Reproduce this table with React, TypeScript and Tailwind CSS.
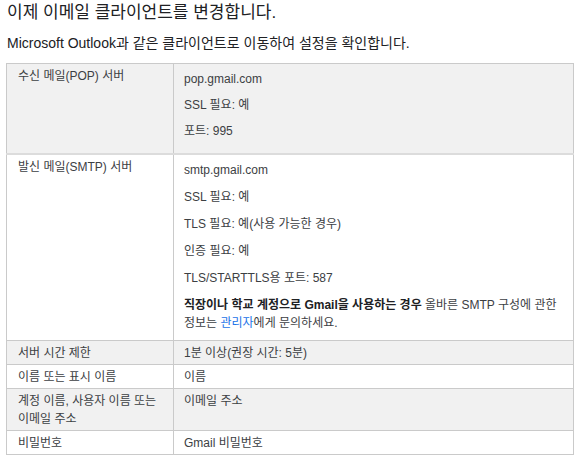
import React from "react";

const font = { fontFamily: "'Liberation Sans', Arial, 'Noto Sans CJK KR', sans-serif" };

function Lines({ items, gap }: { items: React.ReactNode[]; gap: "a" | "b" }) {
  return (
    <div className={gap === "a" ? "flex flex-col gap-[8px] pt-[3px] pb-[11px]" : "flex flex-col gap-[9px] pt-[3px] pb-[6px]"}>
      {items.map((it, i) => (
        <p key={i} className="leading-[18px]">
          {it}
        </p>
      ))}
    </div>
  );
}

const c1 = "w-[167px] align-top border border-[#cacaca] pl-[11px] pr-[8px] pt-[3px] pb-[2px]";
const c2 = "align-top border border-[#cacaca] px-[10px] pt-[3px] pb-[2px]";

export default function App() {
  return (
    <div className="w-[580px] h-[469px] bg-white text-[#202124]" style={font}>
      <div className="px-[7px] pt-[3px]">
        <h1 className="text-[17px] leading-[20px] font-normal">이제 이메일 클라이언트를 변경합니다.</h1>
        <p className="mt-[11px] text-[14px] leading-[18px]">
          Microsoft Outlook과 같은 클라이언트로 이동하여 설정을 확인합니다.
        </p>
      </div>
      <div className="px-[6px] mt-[11px]">
        <table className="w-[568px] border-collapse text-[12px] leading-[18px] text-[#3c4043]">
          <tbody>
            <tr className="bg-[#f1f1f1] border-b-2 border-b-[#dcdcdc]">
              <td className={c1}>수신 메일(POP) 서버</td>
              <td className={c2}>
                <Lines gap="a" items={["pop.gmail.com", "SSL 필요: 예", "포트: 995"]} />
              </td>
            </tr>
            <tr className="bg-white">
              <td className={c1 + " border-t-0"}>발신 메일(SMTP) 서버</td>
              <td className={c2 + " border-t-0"}>
                <Lines
                  gap="b"
                  items={[
                    "smtp.gmail.com",
                    "SSL 필요: 예",
                    "TLS 필요: 예(사용 가능한 경우)",
                    "인증 필요: 예",
                    "TLS/STARTTLS용 포트: 587",
                    <>
                      <b className="font-bold text-[#202124]">직장이나 학교 계정으로 Gmail을 사용하는 경우</b> 올바른 SMTP 구성에 관한
                      정보는 <span className="text-[#1a73e8]">관리자</span>에게 문의하세요.
                    </>,
                  ]}
                />
              </td>
            </tr>
            <tr className="bg-[#f1f1f1]">
              <td className={c1}>서버 시간 제한</td>
              <td className={c2}>1분 이상(권장 시간: 5분)</td>
            </tr>
            <tr className="bg-white">
              <td className={c1}>이름 또는 표시 이름</td>
              <td className={c2}>이름</td>
            </tr>
            <tr className="bg-[#f1f1f1]">
              <td className={c1}>계정 이름, 사용자 이름 또는 이메일 주소</td>
              <td className={c2}>이메일 주소</td>
            </tr>
            <tr className="bg-white">
              <td className={c1}>비밀번호</td>
              <td className={c2}>Gmail 비밀번호</td>
            </tr>
          </tbody>
        </table>
      </div>
    </div>
  );
}
